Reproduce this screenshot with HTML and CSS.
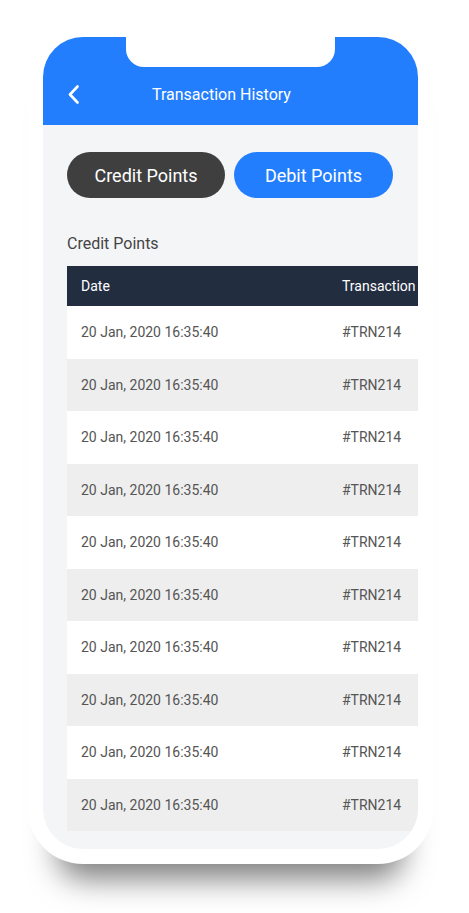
FILE: index.html
```html
<!DOCTYPE html>
<html lang="en">
<head>
  <meta charset="UTF-8">
  <title>Transaction History</title>
  <link rel="stylesheet" href="styles.css">
</head>
<body>

  <!-- Marco del teléfono -->
  <div class="phone">
    <div class="screen">
      <div class="notch"></div>

      <div class="top-bar">
        <a class="back" href="#">
          <svg width="12" height="19" viewBox="0 0 12 19">
            <polyline points="9.5,1.5 2,9.5 9.5,17.5" fill="none" stroke="#fff" stroke-width="2.6" stroke-linecap="round" stroke-linejoin="round"/>
          </svg>
        </a>
        <h1>Transaction History</h1>
      </div>

      <div class="content">
        <div class="tabs">
          <button class="tab tab-dark">Credit Points</button>
          <button class="tab tab-blue">Debit Points</button>
        </div>

        <h2 class="section-title">Credit Points</h2>

        <div class="table">
          <div class="row head">
            <div class="col-date">Date</div>
            <div class="col-id">Transaction</div>
          </div>
          <div class="row"><div class="col-date">20 Jan, 2020 16:35:40</div><div class="col-id">#TRN214</div></div>
          <div class="row"><div class="col-date">20 Jan, 2020 16:35:40</div><div class="col-id">#TRN214</div></div>
          <div class="row"><div class="col-date">20 Jan, 2020 16:35:40</div><div class="col-id">#TRN214</div></div>
          <div class="row"><div class="col-date">20 Jan, 2020 16:35:40</div><div class="col-id">#TRN214</div></div>
          <div class="row"><div class="col-date">20 Jan, 2020 16:35:40</div><div class="col-id">#TRN214</div></div>
          <div class="row"><div class="col-date">20 Jan, 2020 16:35:40</div><div class="col-id">#TRN214</div></div>
          <div class="row"><div class="col-date">20 Jan, 2020 16:35:40</div><div class="col-id">#TRN214</div></div>
          <div class="row"><div class="col-date">20 Jan, 2020 16:35:40</div><div class="col-id">#TRN214</div></div>
          <div class="row"><div class="col-date">20 Jan, 2020 16:35:40</div><div class="col-id">#TRN214</div></div>
          <div class="row"><div class="col-date">20 Jan, 2020 16:35:40</div><div class="col-id">#TRN214</div></div>
        </div>
      </div>
    </div>
  </div>

</body>
</html>
```

FILE: styles.css
```css
body {
  margin: 0;
  padding-bottom: 60px;
  background: #fff;
  font-family: Roboto, "Liberation Sans", sans-serif;
}

.phone {
  width: 375px;
  margin: 22px 0 0 28px;
  padding: 15px;
  background: #fff;
  border-radius: 55px;
  box-shadow: 0 45px 30px -30px rgba(0,0,0,0.5);
}

.screen {
  position: relative;
  height: 812px;
  background: #f4f5f7;
  border-radius: 40px;
  overflow: hidden;
}

.notch {
  position: absolute;
  top: 0;
  left: 83px;
  width: 209px;
  height: 30px;
  background: #fff;
  border-radius: 0 0 18px 18px;
}

/* Barra superior */
.top-bar {
  height: 88px;
  background: #237efe;
  display: flex;
  align-items: flex-end;
  padding: 0 0 21px 25px;
  box-sizing: border-box;
}

.back {
  display: flex;
}

.top-bar h1 {
  margin: 0 0 0 72px;
  color: #fff;
  font-size: 16px;
  font-weight: 400;
  line-height: 19px;
}

.content {
  padding: 27px 24px 0;
}

.tabs {
  display: flex;
  gap: 9px;
}

.tab {
  width: 158px;
  height: 46px;
  border: none;
  border-radius: 23px;
  color: #fff;
  font-family: Roboto, "Liberation Sans", sans-serif;
  font-size: 18px;
}

.tab-dark {
  background: #3f3f3f;
}

.tab-blue {
  width: 159px;
  background: #237efe;
}

.section-title {
  margin: 36px 0 13px;
  font-size: 16px;
  font-weight: 400;
  line-height: 19px;
  color: #444;
}

/* Tabla */
.table {
  width: 420px;
}

.row {
  display: flex;
  align-items: center;
  height: 52.5px;
  padding-left: 14px;
  background: #fff;
  font-size: 14px;
  color: #555;
}

.row:nth-child(odd) {
  background: #eee;
}

.row.head {
  height: 40px;
  background: #232d40;
  color: #fff;
}

.col-date {
  width: 261px;
}
```
